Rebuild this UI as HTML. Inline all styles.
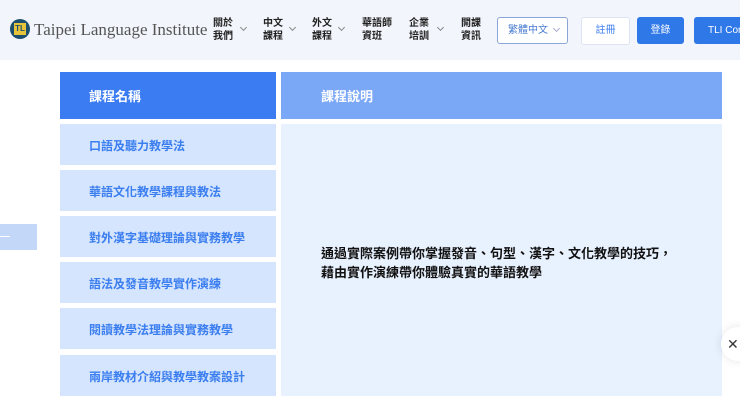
<!DOCTYPE html><html><head><meta charset="utf-8"><style>
body{margin:0;width:740px;height:400px;overflow:hidden;background:#fff;font-family:"Liberation Sans","Noto Sans CJK TC",sans-serif;position:relative}
.hd{position:absolute;left:0;top:0;width:740px;height:60px;background:#f2f5fb}
.a{position:absolute}
.nav{position:absolute;top:17px;font-size:10px;font-weight:bold;line-height:13px;color:#222}
.chev{position:absolute;top:25px;width:4px;height:4px;border-right:1px solid #888;border-bottom:1px solid #888;transform:rotate(45deg)}
.row{position:absolute;left:60px;width:216px;background:#d5e5fd;color:#3b7ef0;font-size:12px;font-weight:bold;line-height:45px;text-indent:29px;height:41px;overflow:hidden}
</style></head><body>
<div class="hd"></div>
<div class="a" style="left:10px;top:19px;width:20px;height:20px;border-radius:50%;background:#1c4f6e;"></div>
<div class="a" style="left:14px;top:23px;width:12px;height:12px;background:#e8c43a;font-size:8px;font-weight:bold;line-height:12px;text-align:center;color:#1c4f6e">TL</div>
<div class="a" style="left:34px;top:20px;font-family:'Liberation Serif',serif;font-size:17px;color:#555">Taipei Language Institute</div>
<div class="nav" style="left:213px">關於<br>我們</div><div class="chev" style="left:241px"></div>
<div class="nav" style="left:263px">中文<br>課程</div><div class="chev" style="left:290px"></div>
<div class="nav" style="left:312px">外文<br>課程</div><div class="chev" style="left:339px"></div>
<div class="nav" style="left:362px">華語師<br>資班</div>
<div class="nav" style="left:409px">企業<br>培訓</div><div class="chev" style="left:438px"></div>
<div class="nav" style="left:461px">開課<br>資訊</div>
<div class="a" style="left:497px;top:17px;width:69px;height:25px;border:1px solid #8aa6d6;border-radius:3px;background:#fff;font-size:10px;color:#4a7cd4;line-height:25px;text-indent:10px">繁體中文</div>
<div class="chev" style="left:554px;top:26px;border-color:#aac"></div>
<div class="a" style="left:581px;top:17px;width:47px;height:26px;border:1px solid #dde5f3;border-radius:3px;background:#fff;font-size:10px;color:#3b7ef0;text-align:center;line-height:26px">註冊</div>
<div class="a" style="left:637px;top:17px;width:47px;height:27px;border-radius:3px;background:#2f78e8;font-size:10px;color:#fff;text-align:center;line-height:27px">登錄</div>
<div class="a" style="left:694px;top:17px;width:60px;height:27px;border-radius:3px;background:#2f78e8;font-size:10px;color:#fff;line-height:27px;text-indent:14px;white-space:nowrap">TLI Community</div>
<div class="a" style="left:60px;top:72px;width:216px;height:47px;background:#3b7cf2;color:#fff;font-size:13px;font-weight:bold;line-height:49px;text-indent:29px">課程名稱</div>
<div class="a" style="left:281px;top:72px;width:441px;height:47px;background:#7ba8f6;color:#fff;font-size:13px;font-weight:bold;line-height:49px;text-indent:40px">課程說明</div>
<div class="row" style="top:124px">口語及聽力教學法</div>
<div class="row" style="top:170px">華語文化教學課程與教法</div>
<div class="row" style="top:216px">對外漢字基礎理論與實務教學</div>
<div class="row" style="top:262px">語法及發音教學實作演練</div>
<div class="row" style="top:308px">閱讀教學法理論與實務教學</div>
<div class="row" style="top:355px">兩岸教材介紹與教學教案設計</div>
<div class="a" style="left:281px;top:124px;width:441px;height:272px;background:#e8f1fe"></div>
<div class="a" style="left:321px;top:244px;font-size:13px;font-weight:bold;line-height:19px;color:#111">通過實際案例帶你掌握發音、句型、漢字、文化教學的技巧，<br>藉由實作演練帶你體驗真實的華語教學</div>
<div class="a" style="left:0;top:224px;width:37px;height:26px;background:#c3d7f9"></div>
<div class="a" style="left:0;top:236px;width:10px;height:1px;background:#fff"></div>
<div class="a" style="left:721px;top:327px;width:34px;height:34px;border-radius:50%;background:#fff;box-shadow:0 0 10px rgba(0,0,0,.1);font-size:14px;line-height:34px;text-indent:6px;color:#333">✕</div>
</body></html>
